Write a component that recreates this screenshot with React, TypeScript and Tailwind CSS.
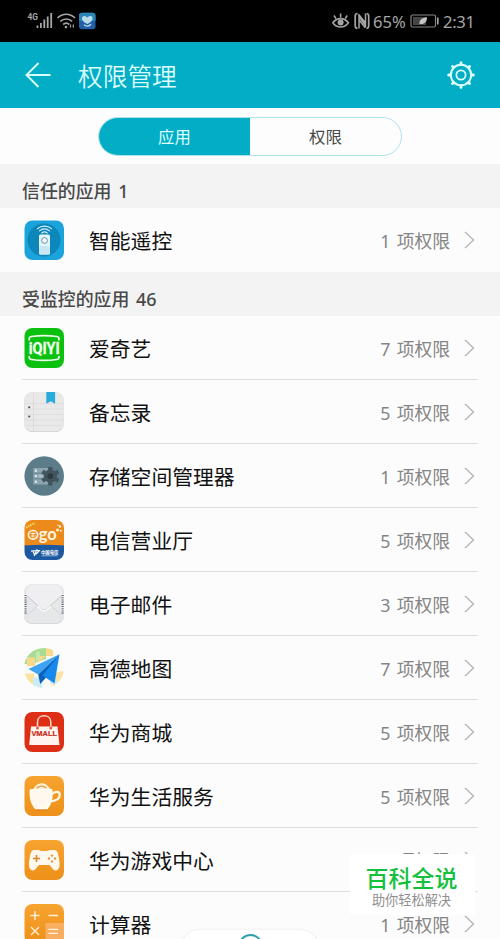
import type { ReactNode } from 'react'

type AppEntry = {
  name: string
  count: number
  icon: ReactNode
}

function AppIcon({ children }: { children: ReactNode }) {
  return (
    <svg className="size-10 shrink-0" viewBox="0 0 40 40" fill="none">
      {children}
    </svg>
  )
}

function RemoteIcon() {
  return (
    <AppIcon>
      <rect x="0.5" y="0.5" width="39.5" height="39.5" rx="8" fill="#1ba3dc" />
      <circle cx="20" cy="20" r="16.5" fill="#0d86b9" />
      <rect x="15" y="14.5" width="11" height="20" rx="1.5" fill="#e4f4fb" />
      <rect x="15" y="26" width="11" height="8.5" rx="1.5" fill="#c8e7f5" />
      <circle cx="20.5" cy="20.5" r="2.9" stroke="#5f8ea6" strokeWidth="1" fill="#f5fbfe" />
      <g stroke="#d8f1fb" strokeWidth="1.2" strokeLinecap="round">
        <path d="M13.5 8.6c4-3.4 10-3.4 14 0" />
        <path d="M15.5 10.9c3-2.4 7-2.4 10 0" />
        <path d="M17.8 13c1.7-1.3 3.7-1.3 5.4 0" />
      </g>
    </AppIcon>
  )
}

function IqiyiIcon() {
  return (
    <AppIcon>
      <rect x="0.5" width="39.5" height="40" rx="8" fill="#0cc00f" />
      <path
        d="M5.2 12.4V11c0-1.6.8-2.3 2.4-2.5 8-1.1 17-1.1 25 0 1.6.2 2.4.9 2.4 2.5v1.4M5.2 28v1c0 1.6.8 2.3 2.4 2.5 8 1.1 17 1.1 25 0 1.6-.2 2.4-.9 2.4-2.5v-1"
        stroke="#e8fde8"
        strokeWidth="1.7"
      />
      <text
        x="20.2"
        y="26.4"
        textAnchor="middle"
        textLength="31"
        lengthAdjust="spacingAndGlyphs"
        fill="#effff0"
        stroke="#effff0"
        strokeWidth="0.3"
        fontFamily="Roboto, sans-serif"
        fontWeight="700"
        fontSize="17"
      >
        iQIYI
      </text>
    </AppIcon>
  )
}

function NotesIcon() {
  return (
    <AppIcon>
      <rect x="0.3" y="0.5" width="39.4" height="39.5" rx="8" fill="#d2d2d2" />
      <rect x="0.3" y="0" width="39.4" height="39.2" rx="8" fill="#e9e9e9" />
      <path d="M1 11.5h38M1 17h38M1 22.500h38M1 28h38M2 33.500h36" stroke="#dcdcdf" strokeWidth="0.8" />
      <path d="M9.500 1v38" stroke="#e5d2d2" strokeWidth="0.8" />
      <path d="M22.300 0h8.800v11.800l-4.400-2.600-4.400 2.600z" fill="#27abd8" />
      <circle cx="5.200" cy="15.300" r="1" fill="#444" />
      <circle cx="5.200" cy="24.600" r="1" fill="#444" />
    </AppIcon>
  )
}

function StorageIcon() {
  return (
    <AppIcon>
      <circle cx="20.2" cy="20" r="19.8" fill="#5c7c8a" />
      <path d="M9.3 12h15v16.5h-15z" fill="#8ea5b0" />
      <path d="M9.3 17.3h15M9.3 22.8h15" stroke="#5f7d8b" strokeWidth="0.8" />
      <g fill="#dce6ea">
        <rect x="10.8" y="13.6" width="2.2" height="2.2" />
        <rect x="10.8" y="19" width="2.2" height="2.2" />
        <rect x="10.8" y="24.6" width="2.2" height="2.2" />
      </g>
      <path d="M14.500 18.500h6v3.200h-6z" fill="#a8bac2" />
      <g transform="translate(26.3 20.2)">
        <circle r="6.6" fill="#42555f" />
        <path
          d="M0-9.200V9.200M-8-4.600 8 4.600M-8 4.600 8-4.600"
          stroke="#42555f"
          strokeWidth="4.2"
        />
        <circle r="2.9" fill="#2d3b43" />
      </g>
    </AppIcon>
  )
}

function TelecomIcon() {
  return (
    <AppIcon>
      <clipPath id="telecom">
        <rect x="0.5" width="39.5" height="40" rx="8" />
      </clipPath>
      <g clipPath="url(#telecom)">
        <path d="M0 0h40v26H0z" fill="#ec8a1b" />
        <path d="M0 25.500q20-1.500 40 0V40H0z" fill="#1c59a0" />
        <path d="M2 7.500 11 3" stroke="#e9cf58" strokeWidth="2.400" strokeDasharray="1.6 0.8" />
      </g>
      <ellipse cx="9" cy="14.800" rx="4.600" ry="4.300" stroke="#fff6e3" strokeWidth="1.700" />
      <path d="M6.500 13.500h5M7 16h4.500M9 12.500v5" stroke="#fff6e3" strokeWidth="0.900" />
      <text
        x="14.8"
        y="19.8"
        textLength="18"
        lengthAdjust="spacingAndGlyphs"
        fill="#fff6e3"
        fontFamily="Lato, sans-serif"
        fontWeight="700"
        fontSize="17"
      >
        go
      </text>
      <g fill="#fff6e3">
        <circle cx="33.500" cy="10" r="1.500" />
        <circle cx="36" cy="6.500" r="1.200" />
        <circle cx="36.800" cy="10.800" r="1" />
        <circle cx="34" cy="5.200" r="0.700" />
      </g>
      <path
        d="M7 31.200c2.500-.6 5-.8 8.300-.6-1.700 2.500-3.400 3.800-5.500 4.200M9.200 30.800c0 1.600.5 2.600 1.500 3.400M13.200 29.200l-3 6.800"
        stroke="#fff"
        strokeWidth="1.300"
      />
      <text
        x="17"
        y="34"
        fill="#fff"
        fontFamily="'Noto Sans CJK SC', sans-serif"
        fontWeight="700"
        fontSize="4.4"
        textLength="17.5"
      >
        中国电信
      </text>
      <path d="M17.500 35.800H33" stroke="#b9cde3" strokeWidth="0.800" />
    </AppIcon>
  )
}

function MailIcon() {
  return (
    <AppIcon>
      <rect x="0" y="0.500" width="40" height="39.500" rx="8" fill="#d4d5d7" />
      <rect x="0" y="0" width="40" height="39.200" rx="8" fill="#e6e7e9" />
      <path d="M1.600 11v19M38.600 11v19" stroke="#6b6f82" strokeWidth="2" strokeDasharray="1.100 1.100" />
      <path d="m3.500 31 11-9.500M37 31l-10.500-9.500" stroke="#d0d2d5" strokeWidth="0.900" />
      <path
        d="M2.500 10.500C2.500 4 5 .8 9 .8h22c4.500 0 6.800 3.200 6.800 9.700L22.500 25q-2.300 2.100-4.700 0z"
        fill="#efeff1"
      />
      <path d="M2.500 11.500 17.800 25.300q2.400 1.900 4.700 0l15.300-13.800" stroke="#c4c6ca" strokeWidth="0.900" />
      <path d="m13.500 22.200 4.300 3.900q2.400 1.900 4.700 0l4.300-3.900" stroke="#fff" strokeWidth="1.200" />
    </AppIcon>
  )
}

function MapIcon() {
  return (
    <AppIcon>
      <clipPath id="map">
        <circle cx="20" cy="20" r="20" />
      </clipPath>
      <g clipPath="url(#map)">
        <path d="M0 0h40v40H0z" fill="#f9f9f5" />
        <path d="M1 0h21v11L8 16H0z" fill="#a9dc93" />
        <path d="M3 9.500h8V18H3zM22 0h7v8h-7z" fill="#fbd98a" />
        <path d="M12 3.500h4v10h-4z" fill="#c5e7b2" />
        <path d="M15 8h7l-7 6z" fill="#fbd98a" />
        <path d="M0 25.500h10V40H4z" fill="#fbe29d" />
        <path d="M30 25l10-2v17H28z" fill="#fae3a6" />
        <path d="M9 29.500h9V40H9z" fill="#cdeaf7" />
        <path d="M26 33h14v3H26z" fill="#d3ecf5" />
      </g>
      <path d="M35.500 6.300 4.500 21l9.700 5.500z" fill="#3da4f3" />
      <path d="M35.500 6.300 14.200 26.500l2 9.500 5-5.500z" fill="#0b62bd" />
      <path d="M35.500 6.300 18.500 27.500l12 8z" fill="#1789ec" />
    </AppIcon>
  )
}

function VmallIcon() {
  return (
    <AppIcon>
      <rect x="0.5" width="39.5" height="40" rx="8" fill="#dc2f16" />
      <path d="M7 14.500h26.500l2 18.500H5.200z" fill="#fff5ee" />
      <path
        d="M13.500 15.500V10c0-8.300 13.300-8.300 13.300 0v5.500"
        stroke="#ffd9c9"
        strokeWidth="1.500"
      />
      <circle cx="13.500" cy="16" r="1.500" fill="#e65b42" />
      <circle cx="26.800" cy="16" r="1.500" fill="#e65b42" />
      <text
        x="20.2"
        y="24.4"
        textAnchor="middle"
        textLength="25.5"
        lengthAdjust="spacingAndGlyphs"
        fill="#c9281a"
        stroke="#c9281a"
        strokeWidth="0.2"
        fontFamily="'Liberation Sans', sans-serif"
        fontWeight="700"
        fontSize="7.2"
      >
        VMALL
      </text>
    </AppIcon>
  )
}

function OrangeTile() {
  return (
    <>
      <linearGradient id="orange" x1="0" y1="0" x2="0" y2="1">
        <stop stopColor="#f7a430" />
        <stop offset="1" stopColor="#ee9019" />
      </linearGradient>
      <rect x="0.5" width="39.5" height="40" rx="8" fill="url(#orange)" />
    </>
  )
}

function CupIcon() {
  return (
    <AppIcon>
      <OrangeTile />
      <path d="M9 13c1.500-1 2.500-4.800 7-5.600 5.500-.8 7.500 2 10.500 5.600z" fill="#fff0d2" />
      <path d="M12.500 12.300c3-2.600 6.500-2.900 10-.3" stroke="#dc9a4e" strokeWidth="1.200" />
      <path d="M28 18c3-3.200 7.800-2.800 7.800.7 0 3.800-4 6-9 6.800" stroke="#fff8ea" strokeWidth="2.200" />
      <path
        d="M5.800 13h22.500c1.200 8.500-.5 15.500-5 20.500H11.500C6.800 29 4.800 21.500 5.800 13z"
        fill="#fff9ef"
      />
      <path d="M11.500 34h11.500" stroke="#c97a1a" strokeWidth="0.800" />
    </AppIcon>
  )
}

function GameIcon() {
  return (
    <AppIcon>
      <OrangeTile />
      <path
        d="M10.500 10h4c1.300 0 1.600 1 3 1h5.600c1.400 0 1.700-1 3-1h4c2.800 0 3.700 2 4.300 5.500.8 4 1.200 6 1.200 9.500 0 5.300-4.300 6.800-6.500 4.300L25.500 25H15l-3.600 4.300c-2.200 2.500-6.500 1-6.500-4.300 0-3.500.4-5.500 1.200-9.500C6.700 12 7.700 10 10.500 10z"
        fill="#fff8ec"
      />
      <path d="M12.500 15v7M9 18.500h7" stroke="#d98530" strokeWidth="1.600" />
      <g fill="#de9550">
        <circle cx="28" cy="15.600" r="1.200" />
        <circle cx="28" cy="21.400" r="1.200" />
        <circle cx="25" cy="18.500" r="1.200" />
        <circle cx="31" cy="18.500" r="1.200" />
      </g>
    </AppIcon>
  )
}

function CalculatorIcon() {
  return (
    <AppIcon>
      <OrangeTile />
      <path d="M21.500 19H40v13c0 5-3 8-8 8H21.500z" fill="#f9ae62" />
      <g stroke="#fff3dc" strokeWidth="1.300">
        <path d="M11 7v9M6.500 11.500h9M24.500 11.500h9.500M7 23l8 8M15 23l-8 8M24.500 25.300h9.500M24.500 29.300h9.500" />
      </g>
    </AppIcon>
  )
}

const trustedApps: AppEntry[] = [{ name: '智能遥控', count: 1, icon: <RemoteIcon /> }]

const monitoredApps: AppEntry[] = [
  { name: '爱奇艺', count: 7, icon: <IqiyiIcon /> },
  { name: '备忘录', count: 5, icon: <NotesIcon /> },
  { name: '存储空间管理器', count: 1, icon: <StorageIcon /> },
  { name: '电信营业厅', count: 5, icon: <TelecomIcon /> },
  { name: '电子邮件', count: 3, icon: <MailIcon /> },
  { name: '高德地图', count: 7, icon: <MapIcon /> },
  { name: '华为商城', count: 5, icon: <VmallIcon /> },
  { name: '华为生活服务', count: 5, icon: <CupIcon /> },
  { name: '华为游戏中心', count: 1, icon: <GameIcon /> },
  { name: '计算器', count: 1, icon: <CalculatorIcon /> },
]

function StatusBar() {
  return (
    <div className="flex h-[42px] shrink-0 items-center justify-between bg-black pr-[25px] pl-[27px] text-[#a6a6a6]">
      <svg width="70" height="20" viewBox="0 0 70 20" fill="none">
        <text x="0.5" y="8.5" fill="#a6a6a6" fontFamily="Roboto, sans-serif" fontWeight="700" fontSize="8.4">
          4G
        </text>
        <path
          d="M10.500 17v-2.500M13.900 17v-5M17.300 17V8.500M20.700 17V5.500M24.200 17V2"
          stroke="#a6a6a6"
          strokeWidth="1.800"
        />
        <g stroke="#a6a6a6" strokeWidth="1.700">
          <path d="M30.500 7c5-5 12.500-5 17.500 0" />
          <path d="M33.300 10.400c3.500-3.200 8.400-3.200 11.900 0" />
          <path d="M36.200 13.500c1.900-1.700 4.200-1.700 6.100 0" />
        </g>
        <circle cx="39" cy="16" r="1.300" fill="#a6a6a6" />
        <path d="M43.500 13.500v3M46.300 13.500v3" stroke="#a6a6a6" strokeWidth="1.200" />
        <rect x="52" y="1.800" width="16.500" height="16.500" rx="3" fill="#235fa8" />
        <path d="M52 4.800a3 3 0 0 1 3-3h10.500a3 3 0 0 1 3 3v5H52z" fill="#2b86b8" />
        <path d="M60.300 13c-8-3.500-5.500-9.500-1.800-7.800l1.800 1.200 1.800-1.200c3.700-1.700 6.200 4.300-1.800 7.800z" fill="#b8dce8" />
        <path d="M57 13.800c2 1.800 5 1.600 7-.6" stroke="#b8dce8" strokeWidth="1.500" />
      </svg>
      <div className="flex items-center text-[16.6px] leading-none">
        <svg width="38" height="18" viewBox="0 0 38 18" fill="none">
          <path
            d="M.8 10.800c4-5.600 11.600-5.600 15.600 0-4 5.600-11.600 5.600-15.600 0z"
            stroke="#a6a6a6"
            strokeWidth="1.600"
          />
          <circle cx="8.600" cy="10.500" r="3" fill="#a6a6a6" />
          <path d="M8.600 1.500v4M2 3.500l2 3.200M15.200 3.500l-2 3.200" stroke="#a6a6a6" strokeWidth="1.600" />
          <path
            d="M25.500 16.500c-1.800-.3-2.300-1-2.300-2.500V4c0-1.500.8-2.300 2.300-2.300M34.500 1.500c1.700.3 2.200 1.200 2.200 2.500v10c0 1.500-.6 2.300-2.200 2.500"
            stroke="#a6a6a6"
            strokeWidth="1.700"
          />
          <path d="M27 16.500V4.500l6.500 9V1.500M26.500 2.200l7 8.800M26.800 7.500l6.500 8.300" stroke="#a6a6a6" strokeWidth="1.500" />
        </svg>
        <span className="mt-0.5 ml-[3px] w-[33px]">65%</span>
        <svg className="ml-[4px]" width="29" height="16" viewBox="0 0 29 16" fill="none">
          <rect x="1" y="2" width="24.500" height="12" rx="1.500" stroke="#858585" strokeWidth="1.200" />
          <path d="M3 4h13v8H3z" fill="#454545" />
          <path d="M27.800 4.500v7" stroke="#a6a6a6" strokeWidth="1.600" />
          <path d="M9.500 11.500C9 7 12 4.800 17 4.300c.2 4.500-3 7.500-7 6.600z" fill="#c4c4c4" />
        </svg>
        <span className="mt-0.5 ml-[4px] w-[32px] tracking-[-0.3px]">2:31</span>
      </div>
    </div>
  )
}

function GearIcon() {
  return (
    <svg width="30" height="30" viewBox="0 0 30 30" fill="none" stroke="#dcffff">
      <circle cx="15" cy="15" r="10.200" strokeWidth="2" />
      <circle cx="15" cy="15" r="4.600" strokeWidth="1.800" />
      <g strokeWidth="3" strokeLinecap="round">
        <path d="M15 2.700v1.600M15 25.700v1.600M2.700 15h1.600M25.700 15h1.600M6.500 6.500l.8.8M22.700 22.700l.8.8M6.500 23.500l.8-.8M22.700 7.300l.8-.8" />
      </g>
    </svg>
  )
}

function AppRow({ app, last = false }: { app: AppEntry; last?: boolean }) {
  return (
    <div className="h-16 shrink-0 px-[22px]">
      <div className={`flex h-full items-center pl-0.5 ${last ? '' : 'border-b border-[#dedede]'}`}>
        {app.icon}
        <span className="mt-1 ml-[25px] text-[20.8px] text-[#111]">{app.name}</span>
        <span className="mt-[3px] ml-auto text-[17.8px] text-[#858585] [word-spacing:1.5px]">
          {app.count} 项权限
        </span>
        <svg className="mr-[3px] ml-[14px]" width="11" height="18" viewBox="0 0 11 18" fill="none">
          <path d="m1 1 8.500 8L1 17" stroke="#b9b9b9" strokeWidth="1.500" />
        </svg>
      </div>
    </div>
  )
}

function SectionTitle({ label, total }: { label: string; total: number }) {
  return (
    <h2 className="flex h-11 shrink-0 items-end bg-[#f3f3f3] px-[22px] pb-[3px] text-[17.9px] leading-7 font-medium text-[#484848] [word-spacing:2px]">
      {label} {total}
    </h2>
  )
}

export default function App() {
  return (
    <div className="relative flex h-[939px] w-[500px] flex-col overflow-hidden bg-[#fcfcfc] font-['Noto_Sans','Noto_Sans_CJK_SC',sans-serif]">
      <StatusBar />

      <header className="flex h-[66px] shrink-0 items-center bg-[#02adc5] pr-6 pl-[25px]">
        <svg width="26" height="26" viewBox="0 0 26 26" fill="none">
          <path d="M25.500 13H1.500M13.500 1 1.500 13l12 12" stroke="#dcffff" strokeWidth="1.900" />
        </svg>
        <h1 className="mt-[3px] ml-[27px] text-[24.7px] font-[350] text-[#dcffff]">权限管理</h1>
        <button className="ml-auto">
          <GearIcon />
        </button>
      </header>

      <div className="flex h-14 shrink-0 items-center justify-center bg-[#fdfdfd]">
        <div className="flex h-[39px] w-[304px] overflow-hidden rounded-full border border-[#aee2ea] text-[16.4px]">
          <button className="w-[151px] bg-[#02adc5] pt-0.5 text-[#dcffff]">应用</button>
          <button className="flex-1 pt-0.5 text-[#484848]">权限</button>
        </div>
      </div>

      <SectionTitle label="信任的应用" total={1} />
      {trustedApps.map((app) => (
        <AppRow key={app.name} app={app} last />
      ))}

      <SectionTitle label="受监控的应用" total={46} />
      {monitoredApps.map((app) => (
        <AppRow key={app.name} app={app} />
      ))}

      {/* floating navigation pill, cut off by the bottom edge */}
      <div className="absolute top-[930px] left-[183px] flex h-8 w-[134px] justify-center rounded-full bg-white pt-1 shadow-[0_0_3px_rgba(0,0,0,0.1)]">
        <div className="size-[25px] rounded-full border-2 border-[#2d9fa8]" />
      </div>

      <div className="absolute top-[854px] left-[350px] flex h-[61px] w-[125px] flex-col items-center bg-white pt-2.5 pr-1.5 pl-1">
        <p className="text-[23px] leading-[28px] font-medium text-[#14c03c]">百科全说</p>
        <p className="mt-px text-[13.2px] leading-[15px] text-[#8f8f8f]">助你轻松解决</p>
      </div>
    </div>
  )
}
